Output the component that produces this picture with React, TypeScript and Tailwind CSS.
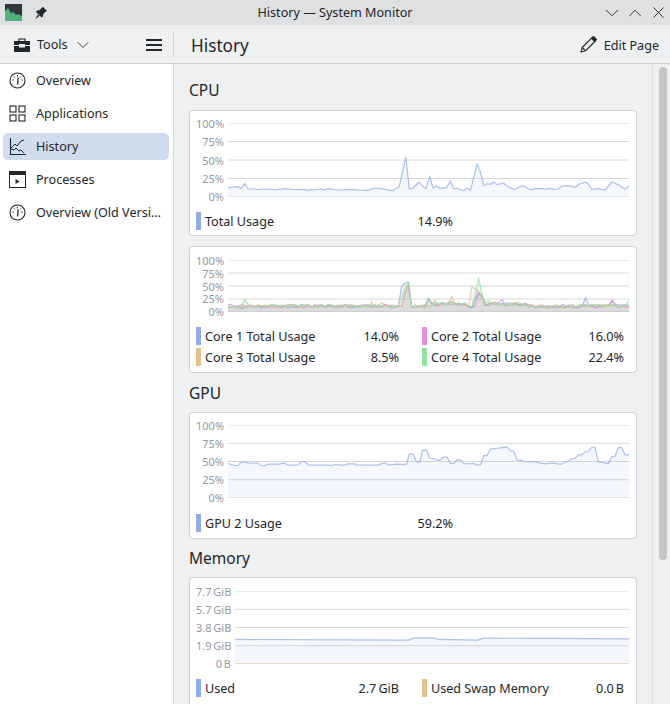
import { ChevronDown, ChevronUp, X } from 'lucide-react'
import type { ReactNode } from 'react'

const cpuLine =
  '128,250 138,247 158,246 168,252 178,236 188,253 208,253 218,255 238,253 258,254 268,256 298,252 318,254 358,255 368,257 378,254 388,256 408,253 418,256 428,252 448,255 468,256 488,254 508,255 518,256 548,257 568,250 588,251 598,254 622,258 642,246 662,157 672,252 682,251 702,232 712,245 722,252 734,217 744,250 754,244 764,251 784,249 796,229 806,253 816,250 826,256 836,257 846,251 856,257 876,178 886,203 896,243 906,237 916,239 926,232 936,240 956,235 966,245 988,255 1008,244 1018,244 1030,253 1040,255 1050,252 1070,252 1080,254 1090,251 1110,254 1120,253 1130,244 1150,243 1170,248 1180,240 1200,232 1210,238 1220,254 1240,252 1260,256 1280,232 1300,240 1320,254 1332,243'

const gpuLine =
  '128,253 148,259 158,259 168,248 178,248 188,251 218,252 228,259 238,260 248,255 278,255 298,252 308,258 338,257 348,247 358,247 372,258 428,258 438,259 448,256 468,258 478,258 488,254 508,254 514,257 578,258 592,252 602,252 612,258 632,255 664,256 672,225 684,225 694,248 704,249 712,213 724,213 734,238 744,238 764,244 774,234 786,234 796,253 806,253 816,242 826,242 836,254 866,253 876,257 886,257 896,229 906,229 916,209 936,207 946,206 966,203 976,215 986,216 996,243 1006,243 1016,247 1056,248 1066,252 1086,254 1096,252 1106,251 1120,255 1130,255 1140,248 1150,247 1160,238 1170,238 1180,227 1190,227 1200,218 1210,217 1220,204 1230,204 1240,249 1250,249 1270,253 1280,233 1290,232 1300,205 1310,205 1320,227 1332,227'

const memLine = '128,284 660,286 675,279 735,279 748,284 870,286 888,280 1100,281 1332,282'

const BLUE = '#8fade2'
const PINK = '#e38fdd'
const ORANGE = '#e3c08c'
const GREEN = '#8fe39c'

// the four core lines only need to look like noise around the same peaks
function coreLine(seed: number, peaks: Record<number, number>) {
  const pts: string[] = []
  for (let i = 0; i <= 120; i++) {
    const noise = Math.abs(Math.sin(i * 12.9898 + seed * 78.233) * 43758.5453) % 1
    let v = 8 + noise * 7
    if (i > 60 && i < 72) v += 4
    if (i > 76 && i < 90) v += 4
    if (peaks[i] !== undefined) v = peaks[i]
    pts.push(`${128 + i * 10.03},${200 - v * 1.54}`)
  }
  return pts.join(' ')
}

const core1 = coreLine(1, { 4: 6, 52: 50, 53: 55, 54: 57, 55: 10, 60: 26, 67: 20, 74: 25, 75: 37, 76: 32, 107: 27, 115: 22 })
const core2 = coreLine(2, { 53: 38, 54: 52, 55: 9, 60: 25, 75: 35, 76: 30, 82: 24, 115: 23 })
const core3 = coreLine(3, { 53: 35, 54: 48, 55: 10, 62: 23, 67: 30, 73: 48, 74: 45, 75: 40, 76: 28, 43: 19, 46: 18 })
const core4 = coreLine(4, { 5: 25, 52: 30, 53: 47, 54: 55, 55: 9, 60: 27, 74: 30, 75: 66, 76: 35, 78: 22, 87: 19, 120: 22 })

function Gauge() {
  return (
    <svg width="17" height="17" viewBox="0 0 17 17" fill="none" stroke="#232629">
      <circle cx="8.5" cy="8.5" r="7.5" strokeWidth="1.1" />
      <path d="M8.5 3v1.5M5 4.4l.8 1.1M12 4.4l-.8 1.1M3.3 8h1.4M12.3 8h1.4" strokeWidth="1" />
      <path d="M8.5 12.5 9.2 5.5" strokeWidth="1.3" />
    </svg>
  )
}

function Grid() {
  return (
    <svg width="17" height="17" viewBox="0 0 17 17" fill="none" stroke="#232629" strokeWidth="1.1">
      <rect x="1" y="1" width="6" height="6" />
      <rect x="10" y="1" width="6" height="6" />
      <rect x="1" y="10" width="6" height="6" />
      <rect x="10" y="10" width="6" height="6" />
    </svg>
  )
}

function HistoryIcon() {
  return (
    <svg width="17" height="17" viewBox="0 0 17 17" fill="none" stroke="#232629">
      <path d="M1.5 0v16.5H17" strokeWidth="1.1" />
      <path d="M2 10l4-4 2 2 4-5 3-1" strokeWidth="1" />
      <path d="M2 11l3 1 2-2 3 3 2-1 3 3" strokeWidth="1" />
    </svg>
  )
}

function ProcessIcon() {
  return (
    <svg width="17" height="17" viewBox="0 0 17 17" fill="none">
      <rect x="0.5" y="0.5" width="16" height="16" stroke="#232629" />
      <rect x="0" y="0" width="17" height="4" fill="#232629" />
      <path d="M6.5 8v5l4-2.5z" fill="#232629" />
    </svg>
  )
}

function Toolbox() {
  return (
    <svg width="16" height="14" viewBox="0 0 16 14">
      <path d="M5 3V1h6v2" fill="none" stroke="#232629" strokeWidth="1.2" />
      <path d="M0 3h16v4h-5V6H5v1H0z" fill="#232629" />
      <path d="M0 8h5v1.5h6V8h5v6H0z" fill="#232629" />
    </svg>
  )
}

function Pin() {
  return (
    <svg width="12" height="12" viewBox="0 0 12 12" fill="#232629">
      <path d="M7.5 0 12 4.5l-1.2.4-2.6 2.7-.2 2.4L6.6 11 1 5.4l1-1.4 2.4-.2L7 1.2z" transform="translate(0 -.5)" />
      <path d="M3 7.5 0 12l4.5-3z" />
    </svg>
  )
}

function AppIcon() {
  return (
    <svg width="17" height="17" viewBox="0 0 17 17">
      <rect width="17" height="17" fill="#31363b" />
      <path d="M0 7 3 4l3 5 2.5-1 2.5 3 2-1 4 2v5H0z" fill="#4cb17c" />
    </svg>
  )
}

function PencilIcon() {
  return (
    <svg width="17" height="17" viewBox="0 0 17 17" fill="none" stroke="#232629" strokeWidth="1.1">
      <path d="M1 16l1.2-4.5L11.5 2.2l3.3 3.3-9.3 9.3z" strokeLinejoin="round" />
      <path d="M2.2 11.5l3.3 3.3" />
      <path d="M12.5 1.2 13.6 0.6l2.8 2.8-.6 1.1-1 1-3.3-3.3z" fill="#232629" />
    </svg>
  )
}

type Series = { points: string; color: string; fill?: string }

function Chart({
  labels,
  labelWidth,
  height,
  top,
  bottom,
  series,
}: {
  labels: string[]
  labelWidth: string
  height: number
  top: number
  bottom: number
  series: Series[]
}) {
  const step = (bottom - top) / 4
  return (
    <div className="flex gap-1">
      <div className={`flex flex-col justify-between whitespace-nowrap pt-[1px] text-right text-[11px] leading-[12px] text-[#96999c] ${labelWidth}`}>
        {labels.map((l) => (
          <span key={l}>{l}</span>
        ))}
      </div>
      <svg
        className="mt-[6px] mb-[6px] block flex-1"
        height={height}
        viewBox={`128 ${top} 1204 ${bottom - top}`}
        preserveAspectRatio="none"
      >
        {[0, 1, 2, 3, 4].map((i) => (
          <line
            key={i}
            x1="128"
            x2="1332"
            y1={top + step * i}
            y2={top + step * i}
            stroke="#d7d8d9"
            strokeWidth="1"
            vectorEffect="non-scaling-stroke"
          />
        ))}
        {series.map((s, i) => (
          <g key={i}>
            <polygon
              points={`128,${bottom} ${s.points} 1332,${bottom}`}
              fill={s.fill ?? '#8fade2'}
              fillOpacity="0.1"
            />
            <polyline
              points={s.points}
              fill="none"
              stroke={s.color}
              strokeOpacity="0.75"
              strokeWidth="1.2"
              vectorEffect="non-scaling-stroke"
            />
          </g>
        ))}
      </svg>
    </div>
  )
}

function Card({ className, children }: { className: string; children: ReactNode }) {
  return (
    <div className={`rounded-[4px] border border-[#d2d4d6] bg-white pl-[6px] pr-[7px] shadow-[0_0_1px_rgba(0,0,0,0.1)] ${className}`}>
      {children}
    </div>
  )
}

function Legend({ color, name, value, className }: { color: string; name: string; value: string; className: string }) {
  return (
    <div className={`flex h-[18px] items-center ${className}`}>
      <span className="mr-[4px] h-[18px] w-[5px]" style={{ backgroundColor: color }} />
      <span className="flex-1 truncate pt-[2px]">{name}</span>
      <span className="pt-[2px]">{value}</span>
    </div>
  )
}

function Heading({ children }: { children: ReactNode }) {
  return <h2 className="flex h-[26px] items-center pt-[2px] text-[15.5px]">{children}</h2>
}

const percent = ['100%', '75%', '50%', '25%', '0%']
const memory = ['7.7\u2009GiB', '5.7\u2009GiB', '3.8\u2009GiB', '1.9\u2009GiB', '0\u2009B']

const navItems = [
  { label: 'Overview', icon: Gauge },
  { label: 'Applications', icon: Grid },
  { label: 'History', icon: HistoryIcon, active: true },
  { label: 'Processes', icon: ProcessIcon },
  { label: 'Overview (Old Version)', icon: Gauge },
]

export default function App() {
  return (
    <div className="flex h-[704px] w-[670px] flex-col overflow-hidden bg-[#eff0f1] font-['Noto_Sans',sans-serif] text-[12.6px] text-[#232629]">
      <header className="relative flex h-[25px] shrink-0 items-center justify-between bg-[#dee0e2] pl-[5px] pr-[2px]">
        <div className="flex items-center gap-[13px]">
          <AppIcon />
          <Pin />
        </div>
        <span className="absolute left-0 right-0 pt-[1px] text-center">History — System Monitor</span>
        <div className="relative flex items-center gap-[1px]">
          <ChevronDown size={22} strokeWidth={1} />
          <ChevronUp size={22} strokeWidth={1} />
          <X size={19} strokeWidth={1.2} className="ml-[2px]" />
        </div>
      </header>

      <div className="flex h-[39px] shrink-0 items-center border-b border-[#cdcfd1] pt-[2px]">
        <div className="flex h-[24px] w-[174px] shrink-0 items-center border-r border-[#d3d5d7] pl-[14px] pr-[11px]">
          <Toolbox />
          <span className="ml-[7px] pt-[1px]">Tools</span>
          <ChevronDown size={20} strokeWidth={1} className="ml-[5px]" />
          <div className="ml-auto flex flex-col gap-[3px]">
            <span className="h-[2px] w-[16px] bg-[#232629]" />
            <span className="h-[2px] w-[16px] bg-[#232629]" />
            <span className="h-[2px] w-[16px] bg-[#232629]" />
          </div>
        </div>
        <span className="ml-[17px] pt-[1px] text-[17.2px]">History</span>
        <div className="ml-auto flex items-center gap-[7px] pr-[11px]">
          <PencilIcon />
          <span className="pt-[2px]">Edit Page</span>
        </div>
      </div>

      <div className="flex min-h-0 flex-1">
        <nav className="flex w-[174px] shrink-0 flex-col gap-[6px] border-r border-[#d3d5d7] bg-white pl-[3px] pr-[4px] pt-[3px]">
          {navItems.map(({ label, icon: Icon, active }) => (
            <div
              key={label}
              className={`flex h-[27px] items-center gap-[10px] rounded-[5px] pl-[6px] pr-[8px] ${active ? 'bg-[#d1dcee]' : ''}`}
            >
              <span className="shrink-0">
                <Icon />
              </span>
              <span className="truncate pt-[2px]">{label}</span>
            </div>
          ))}
        </nav>

        <main className="min-w-0 flex-1 overflow-hidden pl-[15px] pr-[15px] pt-[13px]">
          <Heading>CPU</Heading>
          <Card className="mt-[7px] h-[126px] pt-[6px]">
            <Chart labels={percent} labelWidth="w-[28px]" height={74} top={55} bottom={277} series={[{ points: cpuLine, color: BLUE }]} />
            <div className="mt-[9px] w-[257px]">
              <Legend color={BLUE} name="Total Usage" value="14.9%" className="w-full" />
            </div>
          </Card>

          <Card className="mt-[10px] h-[127px] pt-[7px]">
            <Chart
              labels={percent}
              labelWidth="w-[28px]"
              height={52}
              top={46}
              bottom={200}
              series={[
                { points: core1, color: BLUE, fill: '#9a9a9a' },
                { points: core2, color: PINK, fill: '#9a9a9a' },
                { points: core3, color: ORANGE, fill: '#9a9a9a' },
                { points: core4, color: GREEN, fill: '#9a9a9a' },
              ]}
            />
            <div className="mt-[9px] grid grid-cols-[203px_202px] gap-x-[23px] gap-y-[3px]">
              <Legend color={BLUE} name="Core 1 Total Usage" value="14.0%" className="" />
              <Legend color={PINK} name="Core 2 Total Usage" value="16.0%" className="" />
              <Legend color={ORANGE} name="Core 3 Total Usage" value="8.5%" className="" />
              <Legend color={GREEN} name="Core 4 Total Usage" value="22.4%" className="" />
            </div>
          </Card>

          <div className="mt-[7px]">
            <Heading>GPU</Heading>
          </div>
          <Card className="mt-[6px] h-[127px] pt-[6px]">
            <Chart labels={percent} labelWidth="w-[28px]" height={73} top={137} bottom={357} series={[{ points: gpuLine, color: BLUE }]} />
            <div className="mt-[10px] w-[257px]">
              <Legend color={BLUE} name="GPU 2 Usage" value="59.2%" className="w-full" />
            </div>
          </Card>

          <div className="mt-[6px]">
            <Heading>Memory</Heading>
          </div>
          <Card className="mt-[6px] h-[140px] pt-[7px]">
            <Chart
              labels={memory}
              labelWidth="w-[35px]"
              height={73}
              top={138}
              bottom={358}
              series={[
                { points: memLine, color: BLUE },
                { points: '128,358 1332,358', color: ORANGE },
              ]}
            />
            <div className="mt-[9px] grid grid-cols-[203px_202px] gap-x-[23px]">
              <Legend color={BLUE} name="Used" value={'2.7\u2009GiB'} className="" />
              <Legend color={ORANGE} name="Used Swap Memory" value={'0.0\u2009B'} className="" />
            </div>
          </Card>
        </main>

        <div className="w-[18px] shrink-0 border-l border-[#dcdddf] pl-[6px] pt-[3px]">
          <div className="h-[493px] w-[8px] rounded-full bg-[#c3c5c7]" />
        </div>
      </div>
    </div>
  )
}
